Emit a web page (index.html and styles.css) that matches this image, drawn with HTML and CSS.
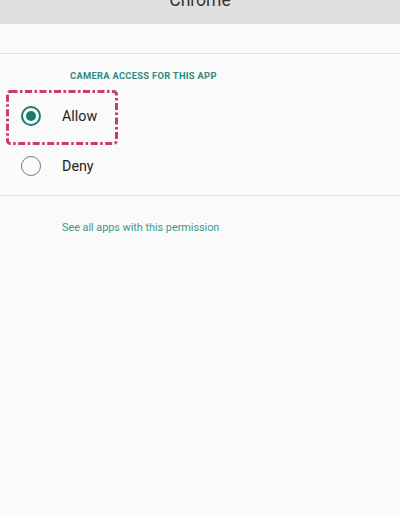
FILE: index.html
```html
<!DOCTYPE html>
<html>
<head>
<meta charset="utf-8">
<link rel="stylesheet" href="styles.css">
</head>
<body>
<div class="screen">
  <header class="appbar"><div class="title">Chrome</div></header>
  <div class="gap"></div>
  <section class="group">
    <div class="label">CAMERA ACCESS FOR THIS APP</div>
    <div class="row">
      <span class="radio on"><span class="dot"></span></span>
      <span class="text">Allow</span>
      <svg class="mark" width="112" height="55" viewBox="0 0 112 55">
        <rect x="1.5" y="1.5" width="109" height="52" rx="3" fill="none" stroke="#cc3a72" stroke-width="3" stroke-dasharray="7 2.5 2.5 2.5"/>
      </svg>
    </div>
    <div class="row">
      <span class="radio"></span>
      <span class="text">Deny</span>
    </div>
  </section>
  <div class="link">See all apps with this permission</div>
</div>
</body>
</html>
```
FILE: styles.css
```css
html, body { margin: 0; padding: 0; }
body {
  background: #fafafa;
  font-family: Roboto, "Noto Sans", sans-serif;
  width: 400px;
  height: 516px;
  overflow: hidden;
}
.screen { display: flex; flex-direction: column; }
.appbar {
  height: 24px;
  background: #e0e0e0;
  overflow: hidden;
  display: flex;
  justify-content: center;
}
.title {
  font-size: 17.5px;
  line-height: 20px;
  margin-top: -10px;
  color: #333;
}
.gap {
  height: 29px;
  border-bottom: 1px solid #e2e2e2;
}
.group {
  border-bottom: 1px solid #e2e2e2;
  padding-bottom: 4px;
}
.label {
  padding: 16px 0 9px 70px;
  line-height: 12px;
  font-size: 9.3px;
  font-weight: 700;
  letter-spacing: 0.32px;
  color: #2f8a7a;
}
.row {
  position: relative;
  height: 50px;
  display: flex;
  align-items: center;
}
.radio {
  box-sizing: border-box;
  width: 20px;
  height: 20px;
  margin-left: 21px;
  border-radius: 50%;
  border: 1.6px solid #7a7a7a;
  display: flex;
  align-items: center;
  justify-content: center;
}
.radio.on { border: 2px solid #167f6c; }
.dot {
  width: 10px;
  height: 10px;
  border-radius: 50%;
  background: #167f6c;
}
.text {
  margin-left: 21px;
  font-size: 14.3px;
  color: #222;
}
.mark {
  position: absolute;
  left: 6px;
  top: -1px;
}
.link {
  padding: 25px 0 0 62px;
  line-height: 14px;
  font-size: 10.8px;
  color: #3a9884;
}
```
